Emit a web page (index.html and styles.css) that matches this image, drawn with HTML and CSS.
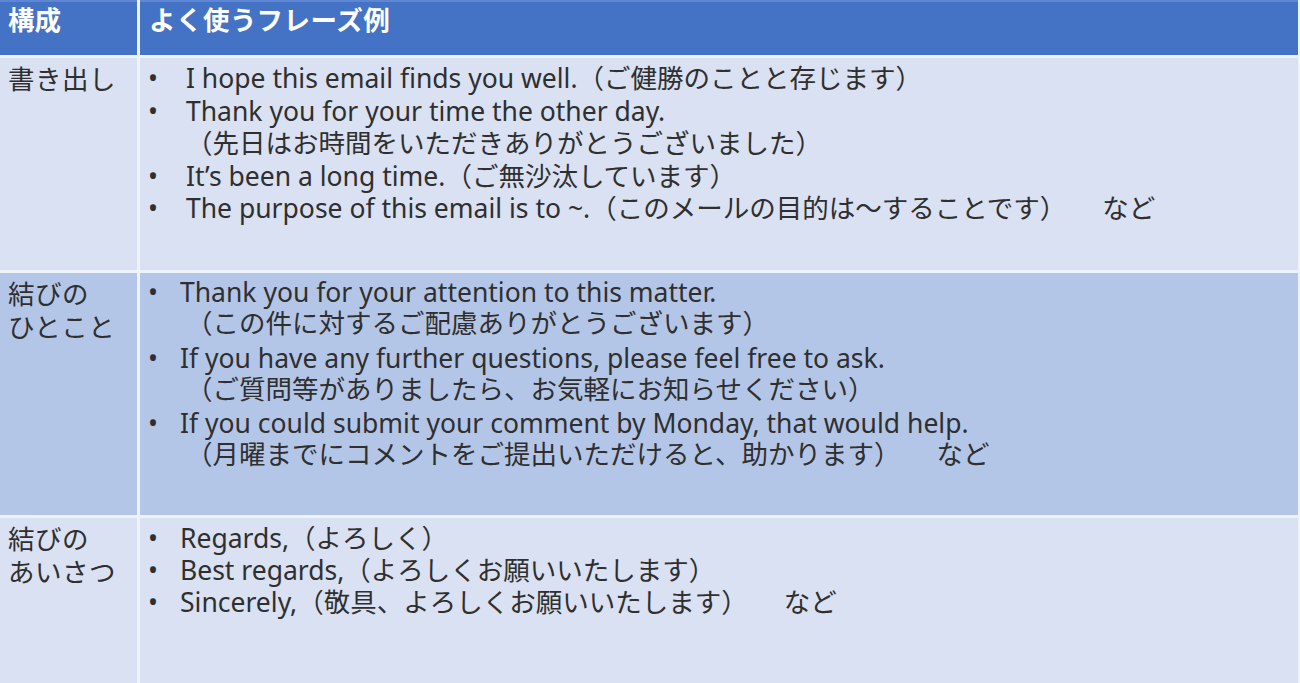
FILE: index.html
```html
<!DOCTYPE html>
<html lang="ja">
<head>
<meta charset="utf-8">
<title>メールの構成とよく使うフレーズ例</title>
<link rel="stylesheet" href="styles.css">
</head>
<body>
<div class="table">
  <div class="head head-1">構成</div>
  <div class="head head-2">よく使うフレーズ例</div>

  <div class="cell label light">書き出し</div>
  <div class="cell body light">
    <ul class="list wide">
      <li><span class="b">•</span><span class="t">I hope this email finds you well.（ご健勝のことと存じます）</span></li>
      <li><span class="b">•</span><span class="t">Thank you for your time the other day.<br>（先日はお時間をいただきありがとうございました）</span></li>
      <li><span class="b">•</span><span class="t">It’s been a long time.（ご無沙汰しています）</span></li>
      <li><span class="b">•</span><span class="t">The purpose of this email is to ~.（このメールの目的は～することです）<span class="nado">など</span></span></li>
    </ul>
  </div>

  <div class="cell label mid">結びの<br>ひとこと</div>
  <div class="cell body mid">
    <ul class="list spaced">
      <li><span class="b">•</span><span class="t">Thank you for your attention to this matter.<span class="jp">（この件に対するご配慮ありがとうございます）</span></span></li>
      <li><span class="b">•</span><span class="t">If you have any further questions, please feel free to ask.<span class="jp">（ご質問等がありましたら、お気軽にお知らせください）</span></span></li>
      <li><span class="b">•</span><span class="t">If you could submit your comment by Monday, that would help.<span class="jp">（月曜までにコメントをご提出いただけると、助かります）<span class="nado">など</span></span></span></li>
    </ul>
  </div>

  <div class="cell label light">結びの<br>あいさつ</div>
  <div class="cell body light">
    <ul class="list">
      <li><span class="b">•</span><span class="t">Regards,（よろしく）</span></li>
      <li><span class="b">•</span><span class="t">Best regards,（よろしくお願いいたします）</span></li>
      <li><span class="b">•</span><span class="t">Sincerely,（敬具、よろしくお願いいたします）<span class="nado">など</span></span></li>
    </ul>
  </div>
</div>
</body>
</html>
```

FILE: styles.css
```css
html, body {
  margin: 0;
  padding: 0;
  background: #eef2f9;
}

body {
  font-family: "Noto Sans", "Noto Sans CJK JP", sans-serif;
  color: #2f2f2f;
}

.table {
  display: grid;
  grid-template-columns: 137px 1fr;
  grid-template-rows: 55px 212px 242px 165px;
  gap: 3px;
  width: 1298px;
  background: #eef2f9;
}

.head {
  box-sizing: border-box;
  background: #4472c4;
  border-top: 2px solid #5f86d2;
  color: #ffffff;
  font-family: "Noto Sans CJK JP", sans-serif;
  font-weight: 700;
  font-size: 26.5px;
  line-height: 34px;
  padding: 0 0 0 8px;
}

.head-2 {
  padding-left: 9px;
  letter-spacing: 0.5px;
}

.light {
  background: #d9e1f2;
}

.mid {
  background: #b4c6e7;
}

.cell {
  font-size: 26.5px;
  line-height: 32.5px;
  padding-top: 4px;
}

.label {
  font-family: "Noto Sans CJK JP", sans-serif;
  padding-left: 8px;
  letter-spacing: 0.5px;
}

.body {
  padding-left: 8px;
}

.list {
  list-style: none;
  margin: 0;
  padding: 0;
}

.list li {
  display: flex;
  line-height: 32px;
}

.b {
  flex: none;
  width: 32px;
}

.wide .b {
  width: 38px;
}

.wide li {
  line-height: 32.5px;
}

.spaced li {
  line-height: 31.3px;
}

.spaced li + li {
  margin-top: 3px;
}

.jp {
  display: block;
  padding-left: 6px;
}

.nado {
  margin-left: 36px;
}
```
